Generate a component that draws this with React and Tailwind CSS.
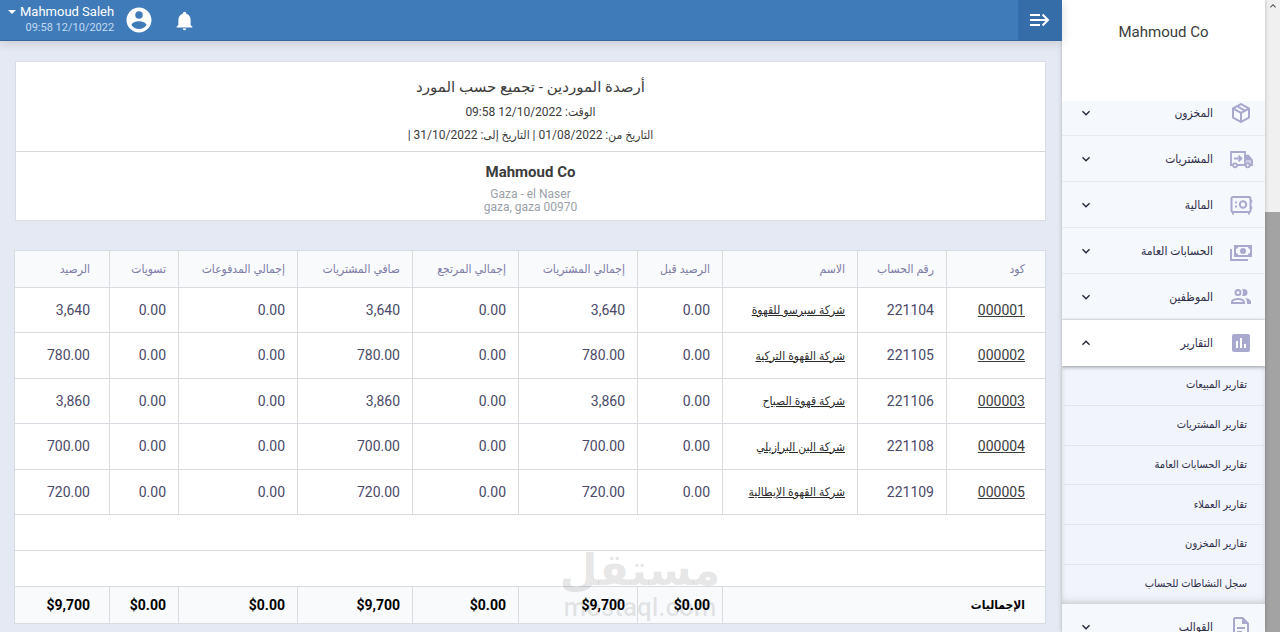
import React from "react";

const ICONS = {
  box: "M21,16.5C21,16.88 20.79,17.21 20.47,17.38L12.57,21.82C12.41,21.94 12.21,22 12,22C11.79,22 11.59,21.94 11.43,21.82L3.53,17.38C3.21,17.21 3,16.88 3,16.5V7.5C3,7.12 3.21,6.79 3.53,6.62L11.43,2.18C11.59,2.06 11.79,2 12,2C12.21,2 12.41,2.06 12.57,2.18L20.47,6.62C20.79,6.79 21,7.12 21,7.5V16.5M12,4.15L10.11,5.22L16,8.61L17.96,7.5L12,4.15M6.04,7.5L12,10.85L13.96,9.75L8.08,6.35L6.04,7.5M5,15.91L11,19.29V12.58L5,9.21V15.91M19,15.91V9.21L13,12.58V19.29L19,15.91Z",
  cash: "M5,6H23V18H5V6M14,9A3,3 0 0,1 17,12A3,3 0 0,1 14,15A3,3 0 0,1 11,12A3,3 0 0,1 14,9M9,8A2,2 0 0,1 7,10V14A2,2 0 0,1 9,16H19A2,2 0 0,1 21,14V10A2,2 0 0,1 19,8H9M1,10H3V20H19V22H1V10Z",
  people: "M13.07 10.41A5 5 0 0 0 13.07 4.59A3.39 3.39 0 0 1 15 4A3.5 3.5 0 0 1 15 11A3.39 3.39 0 0 1 13.07 10.41M5.5 7.5A3.5 3.5 0 1 1 9 11A3.5 3.5 0 0 1 5.5 7.5M7.5 7.5A1.5 1.5 0 1 0 9 6A1.5 1.5 0 0 0 7.5 7.5M16 17V19H2V17S2 13 9 13 16 17 16 17M14 17C13.86 16.22 12.67 15 9 15S4.07 16.31 4 17M15.95 13A5.32 5.32 0 0 1 18 17V19H22V17S22 13.37 15.94 13Z",
  chart: "M5 3H19A2 2 0 0 1 21 5V19A2 2 0 0 1 19 21H5A2 2 0 0 1 3 19V5A2 2 0 0 1 5 3M7 10V17H9V10H7M11 7V17H13V7H11M15 13V17H17V13H15Z",
  file: "M6,2A2,2 0 0,0 4,4V20A2,2 0 0,0 6,22H18A2,2 0 0,0 20,20V8L14,2H6M6,4H13V9H18V20H6V4M8,12V14H16V12H8M8,16V18H13V16H8Z",
  down: "M7.41,8.58L12,13.17L16.59,8.58L18,10L12,16L6,10L7.41,8.58Z",
  up: "M7.41,15.41L12,10.83L16.59,15.41L18,14L12,8L6,14L7.41,15.41Z",
  account: "M12,19.2C9.5,19.2 7.29,17.92 6,16C6.03,14 10,12.9 12,12.9C14,12.9 17.97,14 18,16C16.71,17.92 14.5,19.2 12,19.2M12,5A3,3 0 0,1 15,8A3,3 0 0,1 12,11A3,3 0 0,1 9,8A3,3 0 0,1 12,5M12,2A10,10 0 0,0 2,12A10,10 0 0,0 12,22A10,10 0 0,0 22,12C22,6.47 17.5,2 12,2Z",
  bell: "M21,19V20H3V19L5,17V11C5,7.9 7.03,5.17 10,4.29C10,4.19 10,4.1 10,4A2,2 0 0,1 12,2A2,2 0 0,1 14,4C14,4.1 14,4.19 14,4.29C16.97,5.17 19,7.9 19,11V17L21,19M14,21A2,2 0 0,1 12,23A2,2 0 0,1 10,21",
};

function Icon({ name, className }) {
  return (
    <svg viewBox="0 0 24 24" className={className} fill="currentColor" fillRule="evenodd" aria-hidden="true">
      <path d={ICONS[name]} />
    </svg>
  );
}

function TruckIcon({ className }) {
  return (
    <svg viewBox="0 0 24 24" className={className} fill="none" stroke="currentColor" strokeWidth="1.8" aria-hidden="true">
      <path d="M3.5 18H2V5H16V18H8.5" />
      <path d="M16 8.7H19.3L23 13V18H21M16 18H16.5" />
      <path d="M16 8.7H19.5L23 13H16Z" fill="currentColor" stroke="none" />
      <path d="M16 12.5H23V17H16Z" fill="currentColor" stroke="none" opacity=".55" />
      <circle cx="6" cy="18.3" r="2" />
      <circle cx="18.7" cy="18.3" r="2" />
      <path d="M5 11.5H12M9.6 8.6L12.5 11.5L9.6 14.4" />
    </svg>
  );
}

function SafeIcon({ className }) {
  return (
    <svg viewBox="0 0 24 24" className={className} fill="none" stroke="currentColor" strokeWidth="2" aria-hidden="true">
      <rect x="2.5" y="4" width="19" height="15" rx="1.5" />
      <circle cx="14" cy="11.5" r="3.2" />
      <path d="M7 8.5V10.2M7 12.8V14.5M4 19.5V21.5M20 19.5V21.5" />
      <path d="M22.5 7V9.5M22.5 13.5V16" strokeWidth="1.5" />
    </svg>
  );
}

const NAV_ICON = "size-6 text-[#a9a8cf]";

const NAV = [
  { label: "المخزون", icon: <Icon name="box" className={NAV_ICON} /> },
  { label: "المشتريات", icon: <TruckIcon className={NAV_ICON} /> },
  { label: "المالية", icon: <SafeIcon className={NAV_ICON} /> },
  { label: "الحسابات العامة", icon: <Icon name="cash" className={NAV_ICON} /> },
  { label: "الموظفين", icon: <Icon name="people" className={NAV_ICON} /> },
  {
    label: "التقارير",
    icon: <Icon name="chart" className={NAV_ICON} />,
    children: [
      "تقارير المبيعات",
      "تقارير المشتريات",
      "تقارير الحسابات العامة",
      "تقارير العملاء",
      "تقارير المخزون",
      "سجل النشاطات للحساب",
    ],
  },
  { label: "القوالب", icon: <Icon name="file" className={NAV_ICON} /> },
];

function NavItem({ item }) {
  const open = Boolean(item.children);
  return (
    <li>
      <button
        type="button"
        aria-expanded={open}
        className={
          open
            ? "relative flex h-[46px] w-full items-center bg-white ps-3 pe-4 text-[#2f2e4a] shadow-[0_1px_4px_rgba(0,0,0,0.35)]"
            : "flex h-[46px] w-full items-center border-b border-[#e6eaf1] bg-[#f5f8fc] ps-3 pe-4 text-[#2f2e4a]"
        }
      >
        {item.icon}
        <span className="ms-4 flex-1 text-start text-[12px]">{item.label}</span>
        <Icon name={open ? "up" : "down"} className="size-4 text-[#26263a]" />
      </button>
      {open && (
        <ul className="flex h-[238px] flex-col bg-[#f1f4fb] shadow-[inset_0_-6px_8px_-4px_rgba(0,0,0,0.15),inset_0_0_5px_rgba(0,0,0,0.08)]">
          {item.children.map((label) => (
            <li key={label} className="flex flex-1 border-b border-[#e1e5ee] last:border-b-0">
              <a href="#" className="flex flex-1 items-center ps-[18px] text-[11px] text-[#2f2e4a]">
                {label}
              </a>
            </li>
          ))}
        </ul>
      )}
    </li>
  );
}

function Sidebar() {
  return (
    <aside className="flex w-[203px] shrink-0 flex-col overflow-hidden bg-white shadow-[0_0_4px_rgba(0,0,0,0.25)]">
      <div className="flex h-[101px] shrink-0 justify-center pt-5 text-[15px] leading-6 text-[#3c3c3c]">Mahmoud Co</div>
      <nav className="flex-1 overflow-hidden bg-[#f5f8fc]">
        <ul className="-mt-[11px]">
          {NAV.map((item) => (
            <NavItem key={item.label} item={item} />
          ))}
        </ul>
      </nav>
    </aside>
  );
}

function TopBar() {
  return (
    <header className="flex h-[41px] shrink-0 items-stretch justify-between border-b border-[#35679f] bg-[#407bb9] text-white shadow-[0_2px_10px_rgba(0,0,0,0.15)]">
      <button type="button" aria-label="القائمة" className="flex w-[44px] items-center justify-center bg-[#356da9]">
        <svg viewBox="0 0 20 14" className="h-[14px] w-5" fill="none" stroke="currentColor" strokeWidth="2" aria-hidden="true">
          <path d="M0 2H10M0 7H18M0 12H10M12.5 1.5L18 7L12.5 12.5" />
        </svg>
      </button>
      <div className="flex items-center pe-2">
        <button type="button" aria-label="الإشعارات" className="me-5">
          <Icon name="bell" className="size-[21px]" />
        </button>
        <button type="button" className="flex items-center">
          <Icon name="account" className="size-[30px]" />
          <span dir="ltr" className="me-2.5 flex flex-col pb-0.5">
            <span className="flex items-center justify-end gap-1 text-[13px] leading-4">
              <svg viewBox="0 0 10 5" className="h-1 w-2" fill="currentColor" aria-hidden="true">
                <path d="M0 0H10L5 5Z" />
              </svg>
              Mahmoud Saleh
            </span>
            <span className="text-end text-[11px] leading-[15px] text-[#c3daf2]">09:58 12/10/2022</span>
          </span>
        </button>
      </div>
    </header>
  );
}

function ReportHeading() {
  return (
    <section className="border border-[#d9dce4] bg-white text-center text-[#3c3c3c]">
      <div className="border-b border-[#d5d7dc] pt-[13px] pb-1">
        <h1 className="font-['Roboto','DejaVu_Sans',sans-serif] text-[15px] leading-6">
          أرصدة الموردين - تجميع حسب المورد
        </h1>
        <p className="mt-px text-[12px] leading-6">
          الوقت: <bdi dir="ltr">09:58 12/10/2022</bdi>
        </p>
        <p className="text-[12px] leading-[23px]">
          التاريخ من: <bdi dir="ltr">01/08/2022</bdi> | التاريخ إلى: <bdi dir="ltr">31/10/2022</bdi> |
        </p>
      </div>
      <div className="pt-2 pb-1.5">
        <h2 className="text-[15px] leading-6 font-bold">Mahmoud Co</h2>
        <address className="mt-1 text-[12px] leading-[13px] text-[#9a9fa8] not-italic">
          Gaza - el Naser
          <br />
          gaza, gaza 00970
        </address>
      </div>
    </section>
  );
}

const HEADINGS = [
  "كود",
  "رقم الحساب",
  "الاسم",
  "الرصيد قبل",
  "إجمالي المشتريات",
  "إجمالي المرتجع",
  "صافي المشتريات",
  "إجمالي المدفوعات",
  "تسويات",
  "الرصيد",
];

const ROWS = [
  ["000001", "221104", "شركة سبرسو للقهوة", "3,640"],
  ["000002", "221105", "شركة القهوة التركية", "780.00"],
  ["000003", "221106", "شركة قهوة الصباح", "3,860"],
  ["000004", "221108", "شركة البن البرازيلي", "700.00"],
  ["000005", "221109", "شركة القهوة الإيطالية", "720.00"],
];

const CELL = "border border-[#d9dbe3] px-3 first:ps-5 last:ps-3 last:pe-3 text-start";

function Balances() {
  return (
    <table className="w-full table-fixed border-collapse bg-white text-[14px] text-[#4a4a68]">
      <colgroup>
        <col className="w-[99px]" />
        <col className="w-[89px]" />
        <col className="w-[135px]" />
        <col className="w-[85px]" />
        <col className="w-[119px]" />
        <col className="w-[106px]" />
        <col className="w-[115px]" />
        <col className="w-[119px]" />
        <col className="w-[69px]" />
        <col className="w-[95px]" />
      </colgroup>
      <thead>
        <tr className="h-[37px] bg-[#f9fafc] text-[12px] whitespace-nowrap text-[#7d7ca6]">
          {HEADINGS.map((h) => (
            <th key={h} scope="col" className="border border-[#d9dbe3] px-3 text-start font-normal first:ps-5 last:ps-[19px]">
              {h}
            </th>
          ))}
        </tr>
      </thead>
      <tbody>
        {ROWS.map(([code, account, name, total]) => (
          <tr key={code} className="h-[45px] whitespace-nowrap even:h-[46px]">
            <td className={CELL}>
              <a href="#" className="text-[#3c3c3c] underline">
                {code}
              </a>
            </td>
            <td className={CELL}>{account}</td>
            <td className={CELL + " text-[12px]"}>
              <a href="#" className="text-[#2b2b2b] underline">
                {name}
              </a>
            </td>
            <td className={CELL}>0.00</td>
            <td className={CELL}>{total}</td>
            <td className={CELL}>0.00</td>
            <td className={CELL}>{total}</td>
            <td className={CELL}>0.00</td>
            <td className={CELL}>0.00</td>
            <td className="border border-[#d9dbe3] ps-[19px] text-start">{total}</td>
          </tr>
        ))}
        <tr className="h-[36px]">
          <td colSpan={10} className={CELL} />
        </tr>
        <tr className="h-[36px]">
          <td colSpan={10} className={CELL} />
        </tr>
      </tbody>
      <tfoot>
        <tr className="h-[37px] bg-[#f9fafc] font-bold text-black">
          <th scope="row" colSpan={3} className={CELL + " text-[12px] font-bold"}>
            الإجماليات
          </th>
          {["$0.00", "$9,700", "$0.00", "$9,700", "$0.00", "$0.00"].map((v, i) => (
            <td key={i} className={CELL}>
              <bdi dir="ltr">{v}</bdi>
            </td>
          ))}
          <td className="border border-[#d9dbe3] ps-[19px] text-start">
            <bdi dir="ltr">$9,700</bdi>
          </td>
        </tr>
      </tfoot>
    </table>
  );
}

function Watermark() {
  return (
    <div className="pointer-events-none absolute bottom-3 left-1/2 -translate-x-1/2 text-center text-black/10" aria-hidden="true">
      <div className="font-['DejaVu_Sans',sans-serif] text-[44px] leading-[48px] font-bold">مستقل</div>
      <div dir="ltr" className="text-[26px] leading-[26px] font-medium">mostaql.com</div>
    </div>
  );
}

function Scrollbar() {
  return (
    <div className="flex w-[15px] shrink-0 flex-col items-center bg-[#f0f0f1]" aria-hidden="true">
      <Icon name="up" className="h-[12px] w-[14px] text-[#505050]" />
      <div className="mt-[200px] w-full flex-1 bg-[#a3a3a3]" />
    </div>
  );
}

export default function App() {
  return (
    <div
      dir="rtl"
      lang="ar"
      className="relative flex h-screen overflow-hidden bg-[#e5e9f3] font-['Roboto','DejaVu_Sans_Condensed','DejaVu_Sans',sans-serif]"
    >
      <Scrollbar />
      <Sidebar />
      <div className="flex min-w-0 flex-1 flex-col">
        <TopBar />
        <main className="flex flex-col gap-[29px] ps-4 pe-[15px] pt-5">
          <ReportHeading />
          <Balances />
        </main>
      </div>
      <Watermark />
    </div>
  );
}
